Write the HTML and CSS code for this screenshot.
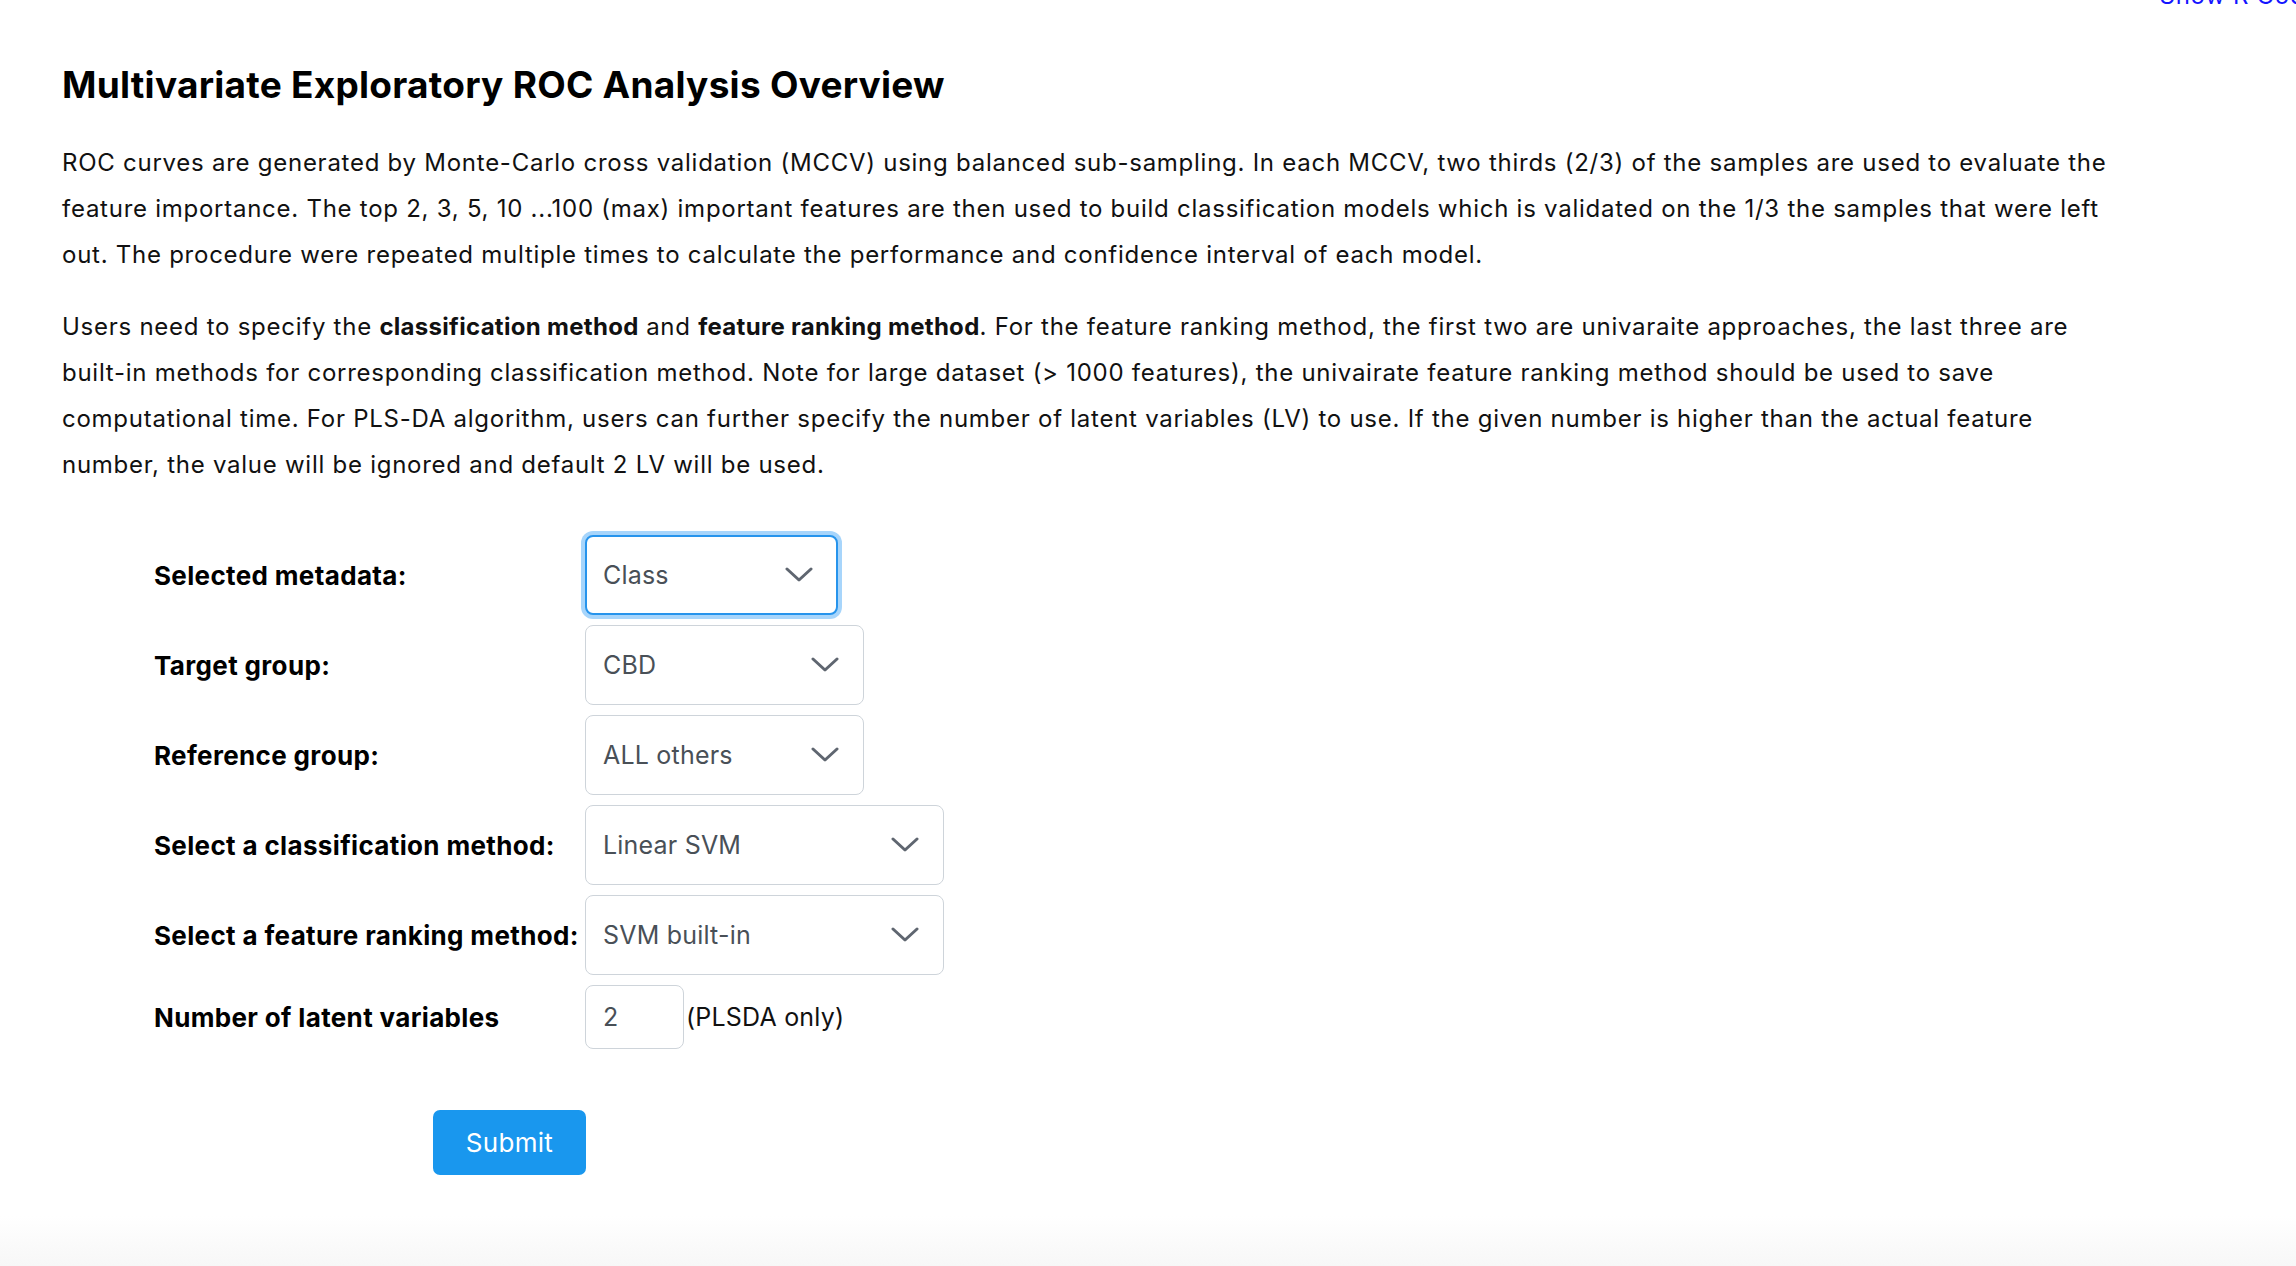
FILE: index.html
```html
<!DOCTYPE html>
<html>
<head>
	<meta charset="utf-8">
	<meta name="viewport" content="width=device-width, initial-scale=1">
	<title>Multivariate ROC Analysis</title>
	<link rel="stylesheet" href="styles.css">
</head>
<body>
	<div class="topbar">
		<a class="code-link" href="#">Show R Code</a>
	</div>
	<div class="page">
		<h1>Multivariate Exploratory ROC Analysis Overview</h1>
		<p>ROC curves are generated by Monte-Carlo cross validation (MCCV) using balanced sub-sampling. In each MCCV, two thirds (2/3) of the samples are used to evaluate the feature importance. The top 2, 3, 5, 10 ...100 (max) important features are then used to build classification models which is validated on the 1/3 the samples that were left out. The procedure were repeated multiple times to calculate the performance and confidence interval of each model.</p>
		<p>Users need to specify the <b>classification method</b> and <b>feature ranking method</b>. For the feature ranking method, the first two are univaraite approaches, the last three are built-in methods for corresponding classification method. Note for large dataset (&gt; 1000 features), the univairate feature ranking method should be used to save computational time. For PLS-DA algorithm, users can further specify the number of latent variables (LV) to use. If the given number is higher than the actual feature number, the value will be ignored and default 2 LV will be used.</p>

		<form class="roc-form">
			<label class="field-label" for="meta">Selected metadata:</label>
			<div class="select-wrap w-sm focused">
				<select id="meta"><option>Class</option></select>
				<svg class="chev" viewBox="0 0 28 16"><path d="M2 2 L14 13 L26 2"/></svg>
			</div>

			<label class="field-label" for="target">Target group:</label>
			<div class="select-wrap w-md">
				<select id="target"><option>CBD</option></select>
				<svg class="chev" viewBox="0 0 28 16"><path d="M2 2 L14 13 L26 2"/></svg>
			</div>

			<label class="field-label" for="ref">Reference group:</label>
			<div class="select-wrap w-md">
				<select id="ref"><option>ALL others</option></select>
				<svg class="chev" viewBox="0 0 28 16"><path d="M2 2 L14 13 L26 2"/></svg>
			</div>

			<label class="field-label" for="cls">Select a classification method:</label>
			<div class="select-wrap w-lg">
				<select id="cls"><option>Linear SVM</option></select>
				<svg class="chev" viewBox="0 0 28 16"><path d="M2 2 L14 13 L26 2"/></svg>
			</div>

			<label class="field-label" for="rank">Select a feature ranking method:</label>
			<div class="select-wrap w-lg">
				<select id="rank"><option>SVM built-in</option></select>
				<svg class="chev" viewBox="0 0 28 16"><path d="M2 2 L14 13 L26 2"/></svg>
			</div>

			<label class="field-label" for="lv">Number of latent variables</label>
			<div class="lv-row">
				<input type="text" id="lv" value="2">
				<span>(PLSDA only)</span>
			</div>
		</form>

		<button class="btn" type="button">Submit</button>
	</div>
</body>
</html>
```

FILE: styles.css
```css
/* General Reset */
* {
	box-sizing: border-box;
	margin: 0;
	padding: 0;
}

html {
	min-height: 100%;
}

body {
	min-height: 1266px;
	font-family: Inter, "Noto Sans", sans-serif;
	color: #111;
	overflow: hidden;
	background: linear-gradient(to bottom, #fff 0, #fff calc(100% - 50px), #f7f7f7 100%);
}

/* Top link */
.topbar {
	display: flex;
	justify-content: flex-end;
	height: 24px;
	margin-top: -16px;
	margin-right: -24px;
}

.code-link {
	color: #1414ff;
	font-size: 24px;
	line-height: 24px;
	letter-spacing: 0.7px;
	text-decoration: none;
	white-space: nowrap;
}

/* Content */
.page {
	padding: 55px 0 0 62px;
}

h1 {
	font-size: 37px;
	line-height: 44px;
	font-weight: 700;
	color: #000;
	letter-spacing: 0.25px;
}

p {
	max-width: 2058px;
	font-size: 24px;
	line-height: 46px;
	letter-spacing: 0.74px;
	color: #111;
	margin-top: 33px;
}

p + p {
	margin-top: 26px;
}

p b {
	letter-spacing: 0.3px;
}

/* Form */
.roc-form {
	display: grid;
	grid-template-columns: 431px auto;
	row-gap: 10px;
	align-items: center;
	margin: 47px 0 0 92px;
}

.field-label {
	font-size: 26px;
	font-weight: 700;
	letter-spacing: 0.35px;
	color: #000;
}

.select-wrap {
	position: relative;
	height: 80px;
}

.w-sm { width: 253px; }
.w-md { width: 279px; }
.w-lg { width: 359px; }

.select-wrap select {
	appearance: none;
	-webkit-appearance: none;
	width: 100%;
	height: 100%;
	padding: 0 50px 0 17px;
	border: 1px solid #ced4da;
	border-radius: 8px;
	background: #fff;
	font-family: inherit;
	font-size: 25px;
	letter-spacing: 0.2px;
	color: #495057;
	outline: none;
}

.focused select {
	border: 2px solid #2794ec;
	padding-left: 16px;
	box-shadow: 0 0 0 4px #a7d5fb;
}

.chev {
	position: absolute;
	right: 25px;
	top: 32px;
	width: 28px;
	height: 16px;
	fill: none;
	stroke: #5f6670;
	stroke-width: 3;
	stroke-linecap: round;
	stroke-linejoin: round;
	pointer-events: none;
}

.lv-row {
	display: flex;
	align-items: center;
	gap: 2px;
	font-size: 25px;
	letter-spacing: 0.2px;
	color: #111;
}

.lv-row input {
	width: 99px;
	height: 64px;
	padding: 0 17px;
	border: 1px solid #ced4da;
	border-radius: 8px;
	font-family: inherit;
	font-size: 25px;
	color: #495057;
	outline: none;
}

/* Button */
.btn {
	display: block;
	margin: 61px 0 0 371px;
	width: 153px;
	height: 65px;
	border: none;
	border-radius: 7px;
	background: #1997ee;
	color: #fff;
	font-family: inherit;
	font-size: 26px;
	letter-spacing: 0.3px;
	cursor: pointer;
}
```
